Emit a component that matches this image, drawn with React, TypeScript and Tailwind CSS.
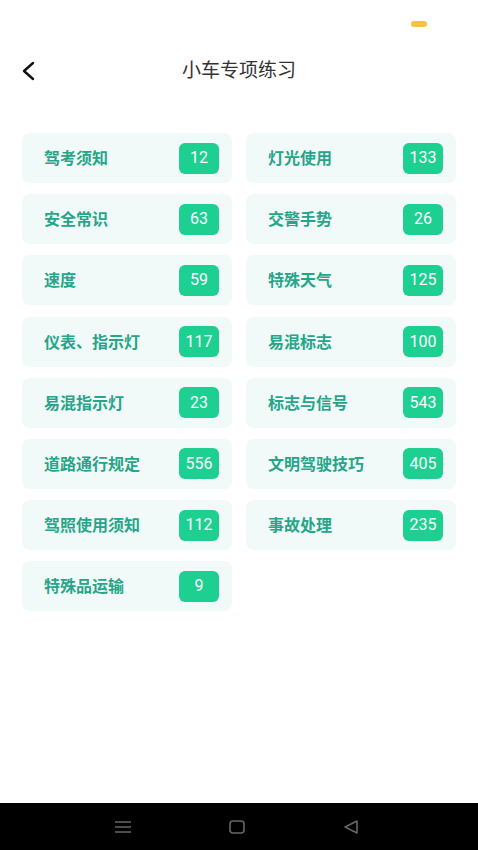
import React from 'react';

interface Topic {
  name: string;
  count: number;
}

const topics: Topic[] = [
  { name: '驾考须知', count: 12 },
  { name: '灯光使用', count: 133 },
  { name: '安全常识', count: 63 },
  { name: '交警手势', count: 26 },
  { name: '速度', count: 59 },
  { name: '特殊天气', count: 125 },
  { name: '仪表、指示灯', count: 117 },
  { name: '易混标志', count: 100 },
  { name: '易混指示灯', count: 23 },
  { name: '标志与信号', count: 543 },
  { name: '道路通行规定', count: 556 },
  { name: '文明驾驶技巧', count: 405 },
  { name: '驾照使用须知', count: 112 },
  { name: '事故处理', count: 235 },
  { name: '特殊品运输', count: 9 },
];

const TopicCard: React.FC<{ topic: Topic }> = ({ topic }) => (
  <div className="flex h-[50px] items-center justify-between rounded-lg bg-[#f1faf8] pl-[22px] pr-[13px]">
    <span className="text-[16px] font-bold text-[#27a589]">{topic.name}</span>
    <span
      className="flex h-[31px] w-[40px] items-center justify-center rounded-md bg-[#1dcf90] text-[16px] text-white"
      style={{ fontFamily: 'Roboto, "Noto Sans", sans-serif' }}
    >
      {topic.count}
    </span>
  </div>
);

export default function App() {
  return (
    <div
      className="flex h-[850px] w-[478px] flex-col bg-white"
      style={{ fontFamily: '"Noto Sans", "Noto Sans CJK SC", sans-serif' }}
    >
      {/* status bar */}
      <div className="flex h-[48px] items-start justify-end pr-[51px] pt-[21px]">
        <div className="h-[6px] w-[16px] rounded-sm bg-[#f5c242]" />
      </div>

      {/* header */}
      <div className="relative flex h-[44px] items-center justify-center">
        <svg
          className="absolute left-[20px] top-[13px]"
          width="16"
          height="20"
          viewBox="0 0 16 20"
          fill="none"
          stroke="#111"
          strokeWidth="2.4"
          strokeLinecap="round"
          strokeLinejoin="round"
        >
          <path d="M13 2 L4 10 L13 18" />
        </svg>
        <h1 className="text-[19px] text-[#333]">小车专项练习</h1>
      </div>

      {/* topics */}
      <div className="grid grid-cols-2 gap-x-[14px] gap-y-[11.2px] px-[22px] pt-[41px]">
        {topics.map((t) => (
          <TopicCard key={t.name} topic={t} />
        ))}
      </div>

      <div className="flex-1" />

      {/* nav bar */}
      <div className="flex h-[47px] items-center justify-center gap-[96px] bg-black pr-[4px]">
        <svg width="18" height="16" viewBox="0 0 18 16" stroke="#666" strokeWidth="1.6">
          <path d="M1 3 H17 M1 8 H17 M1 13 H17" />
        </svg>
        <svg width="18" height="16" viewBox="0 0 18 16" fill="none" stroke="#666" strokeWidth="1.6">
          <rect x="2" y="2" width="14" height="12" rx="3" />
        </svg>
        <svg width="18" height="16" viewBox="0 0 18 16" fill="none" stroke="#666" strokeWidth="1.6" strokeLinejoin="round">
          <path d="M15 2 L3 8 L15 14 Z" />
        </svg>
      </div>
    </div>
  );
}
